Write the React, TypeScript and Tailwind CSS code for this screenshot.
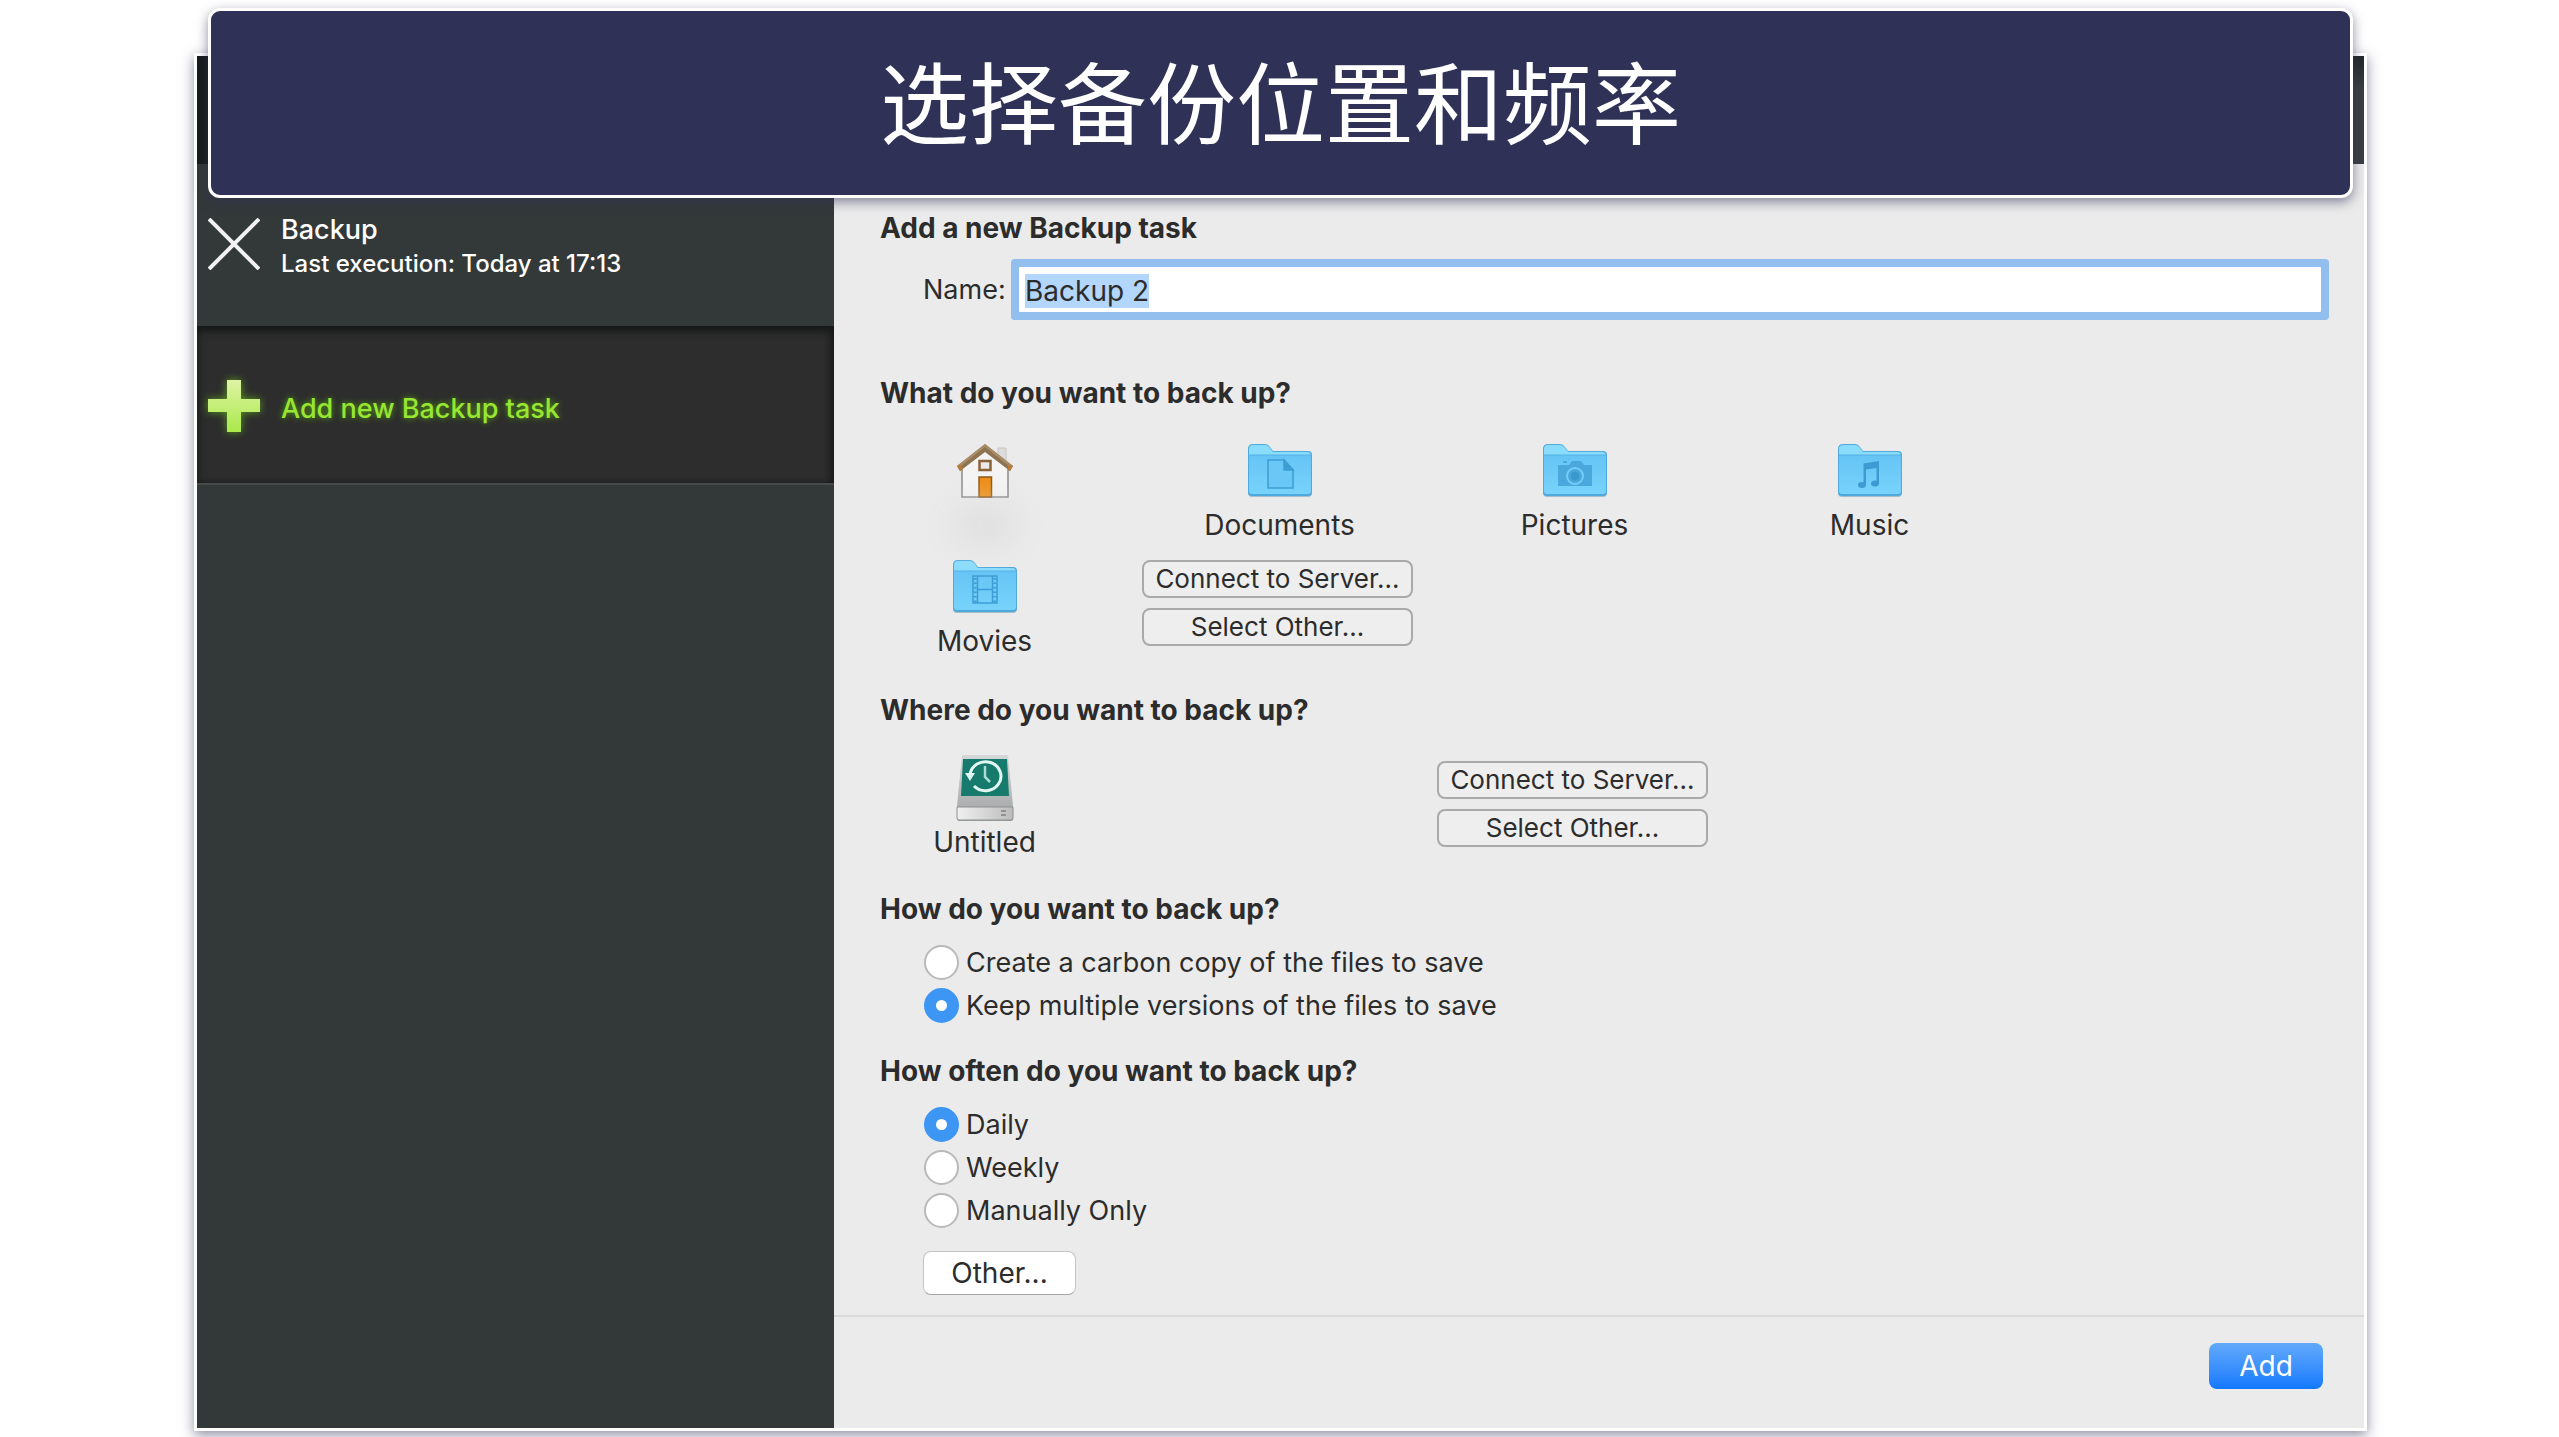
import { useEffect, useRef, type ReactNode } from 'react'

type Glyph = 'document' | 'camera' | 'music' | 'film'

const howOptions = ['Create a carbon copy of the files to save', 'Keep multiple versions of the files to save']
const frequencyOptions = ['Daily', 'Weekly', 'Manually Only']

function FolderGlyph({ glyph }: { glyph: Glyph }) {
  if (glyph === 'document') {
    return (
      <g stroke="#3c9dd4" strokeWidth="1.5">
        <path d="M20 16h16l9 10v18H20z" fill="#6bc8f6" />
        <path d="M36 16v10h9z" fill="#3c9dd4" />
      </g>
    )
  }
  if (glyph === 'camera') {
    return (
      <g>
        <path d="M15 21h11l3-4h9l3 4h8v21H15z" fill="#4aa8dc" />
        <path d="M20 17h4v2h-4z" fill="#4aa8dc" />
        <circle cx="32" cy="32" r="8" fill="#4aa8dc" stroke="#74cdf8" strokeWidth="2" />
        <circle cx="32" cy="32" r="4.5" fill="#3a98ce" />
      </g>
    )
  }
  if (glyph === 'music') {
    return (
      <g fill="#3d9ad2">
        <path d="M25.5 19.5 41 17v22h-2.5V24L28 25.5V41h-2.5z" />
        <ellipse cx="24" cy="41" rx="4" ry="3" />
        <ellipse cx="37" cy="39.5" rx="4" ry="3" />
      </g>
    )
  }
  return (
    <g fill="none" stroke="#3c9dd4" strokeWidth="1.5">
      <path d="M20 16h24v27H20zM24.5 16v27M39.5 16v27M24.5 29.5h15" />
      <path d="M22.2 18v25M41.8 18v25" strokeWidth="3" strokeDasharray="1.5 3" />
    </g>
  )
}

function FolderIcon({ glyph }: { glyph: Glyph }) {
  return (
    <svg viewBox="0 0 64 54" className="w-16 h-[54px]" aria-hidden="true">
      <defs>
        <linearGradient id={`front-${glyph}`} x1="0" y1="0" x2="0" y2="1">
          <stop offset="0" stopColor="#66c4f5" />
          <stop offset="1" stopColor="#77d3fb" />
        </linearGradient>
      </defs>
      <path d="M0 6q0-5 5-5h12q3 0 5 3l3 4h35q4 0 4 4v37q0 4-4 4H4q-4 0-4-4z" fill="#a9bcc8" />
      <path d="M0 5q0-5 5-5h12q3 0 5 3l3 4h35q4 0 4 4v37q0 4-4 4H4q-4 0-4-4z" fill="#4ea9dc" />
      <path d="M1 5q0-4 4-4h12q3 0 5 3l3 4h34q4 0 4 4v35H1z" fill="#8adcfd" />
      <path d="M1 11h62v36q0 3-3 3H4q-3 0-3-3z" fill={`url(#front-${glyph})`} />
      <path d="M1 11h62" stroke="#55b2e3" strokeWidth="1" />
      <FolderGlyph glyph={glyph} />
    </svg>
  )
}

function HomeIcon() {
  return (
    <svg viewBox="0 0 56 56" className="w-14 h-14" aria-hidden="true">
      <path d="M41 5h8v14l-8-7z" fill="#dcdcda" stroke="#c4c4c0" />
      <path d="M5 25 28 6l23 19v29H5z" fill="#f4f4f4" stroke="#8b8b8b" strokeWidth="1.5" />
      <path d="M28 1 56 23l-3 5L28 9 3 28l-3-5z" fill="#8e7351" />
      <path d="M28 1 56 23l-1.5 2L28 4 1.5 25 0 23z" fill="#a98d68" />
      <path d="M52 22l4 1-3 5-3-2zM4 22l-4 1 3 5 3-2z" fill="#b87a35" />
      <rect x="22.5" y="18" width="11" height="9" fill="#e9e9e9" stroke="#8c6239" strokeWidth="2.5" />
      <rect x="22" y="34" width="12.5" height="20" fill="#ee8d13" stroke="#8c5716" strokeWidth="1.5" />
    </svg>
  )
}

function DriveIcon() {
  return (
    <svg viewBox="0 0 58 68" className="w-[58px] h-[68px]" aria-hidden="true">
      <defs>
        <linearGradient id="drive-body" x1="0" y1="0" x2="0" y2="1">
          <stop offset="0" stopColor="#d5d8d8" />
          <stop offset="1" stopColor="#9fa3a4" />
        </linearGradient>
        <linearGradient id="drive-front" x1="0" y1="0" x2="1" y2="0">
          <stop offset="0" stopColor="#f0f0f0" />
          <stop offset="1" stopColor="#bcbcbc" />
        </linearGradient>
      </defs>
      <path d="M6 1h46l5 51v13q0 2-2 2H3q-2 0-2-2V52z" fill="url(#drive-body)" />
      <path d="M7 5h44l2 37H5z" fill="#167a6d" />
      <path d="M1 53h56v11q0 2-2 2H3q-2 0-2-2z" fill="url(#drive-front)" stroke="#8d8f90" strokeWidth="1" />
      <path d="M45 57h5M45 61h5" stroke="#7f8182" strokeWidth="1.5" />
      <path d="M14 21a15.5 14.5 0 1 1 4 11" fill="none" stroke="#e1f7f3" strokeWidth="3" />
      <path d="M9 19h10l-5 8z" fill="#e1f7f3" />
      <path d="M29 12v11l5 5" fill="none" stroke="#a9dcd4" strokeWidth="2.5" />
    </svg>
  )
}

function Place({ label, children }: { label?: string; children: ReactNode }) {
  return (
    <div className="flex flex-col items-center">
      <div className="flex h-[68px] items-center">{children}</div>
      {label ? (
        <p className="h-10">{label}</p>
      ) : (
        <div className="h-10 w-16 rounded-full bg-[#dcdcdc]/80 blur-lg" />
      )}
    </div>
  )
}

function SourceButtons() {
  return (
    <div className="flex flex-col items-center gap-[10px] pt-[7px] pr-1">
      {['Connect to Server...', 'Select Other...'].map((label) => (
        <button
          key={label}
          type="button"
          className="h-[38px] w-[271px] rounded-lg border-2 border-[#a9a9a9] bg-[#eeeeee] text-[26px] leading-[32px]"
        >
          {label}
        </button>
      ))}
    </div>
  )
}

function SectionTitle({ children }: { children: ReactNode }) {
  return <h2 className="pl-[46px] font-bold">{children}</h2>
}

function RadioGroup({ name, options, selected }: { name: string; options: string[]; selected: string }) {
  return (
    <div className="flex flex-col items-start pl-[90px] pt-3 text-[27px]">
      {options.map((option) => (
        <label key={option} className="flex h-[43px] items-center gap-[7px]">
          <input
            type="radio"
            name={name}
            defaultChecked={option === selected}
            className="size-[35px] appearance-none rounded-full border-2 border-[#b9b9b9] bg-white checked:border-[12px] checked:border-[#3e96f4]"
          />
          {option}
        </label>
      ))}
    </div>
  )
}

function Sidebar() {
  return (
    <nav className="w-[637px] shrink-0 bg-[#333939] text-white">
      <a href="#backup" className="flex h-[162px] items-start gap-[21px] pl-[11px] pt-[48px]">
        <svg viewBox="0 0 52 52" className="mt-[6px] size-[52px]" aria-hidden="true">
          <path d="M1 1l50 50M51 1 1 51" stroke="#f1f1f1" strokeWidth="4" />
        </svg>
        <span className="flex flex-col">
          <span className="text-[27px] font-medium leading-[36px]">Backup</span>
          <span className="text-[24px] font-medium leading-[32px]">Last execution: Today at 17:13</span>
        </span>
      </a>
      <a
        href="#new"
        className="flex h-[159px] items-start gap-[21px] border-b-2 border-[#454b4b] bg-[#2d2d2d] pl-[11px] pt-[54px] shadow-[inset_0_5px_8px_#151818,inset_-3px_0_6px_#1d1f1f]"
      >
        <svg
          viewBox="0 0 52 52"
          className="size-[52px] drop-shadow-[0_0_4px_#5b9b1c]"
          aria-hidden="true"
        >
          <defs>
            <linearGradient id="plus" x1="0" y1="0" x2="0" y2="1">
              <stop offset="0" stopColor="#dff3a4" />
              <stop offset="1" stopColor="#a9ea4b" />
            </linearGradient>
          </defs>
          <path d="M19 0h14v19h19v13H33v20H19V32H0V19h19z" fill="url(#plus)" />
        </svg>
        <span className="text-[27px] font-medium leading-[58px] text-[#98e632] [text-shadow:0_0_6px_#5aa512]">
          Add new Backup task
        </span>
      </a>
    </nav>
  )
}

function TaskForm() {
  const nameRef = useRef<HTMLInputElement>(null)

  useEffect(() => {
    nameRef.current?.focus()
    nameRef.current?.select()
  }, [])

  return (
    <form className="flex flex-1 flex-col bg-[#ebebeb] text-[28px] leading-[40px] text-[#2c2c2c]">
      <div className="pt-[44px]">
        <SectionTitle>Add a new Backup task</SectionTitle>
        <div className="mt-[11px] flex items-center pl-[89px] pr-[43px]">
          <label htmlFor="task-name" className="w-[96px] text-[27px]">
            Name:
          </label>
          <input
            id="task-name"
            ref={nameRef}
            type="text"
            defaultValue="Backup 2"
            className="my-2 h-[45px] flex-1 rounded-[1px] bg-white px-[6px] pt-[2px] outline-none ring-8 ring-[#93bfee] selection:bg-[#b3d6fd] selection:text-[#2c2c2c]"
          />
        </div>
      </div>

      <section className="mt-[53px]">
        <SectionTitle>What do you want to back up?</SectionTitle>
        <div className="mt-6 grid grid-cols-[repeat(4,295px)] gap-y-2 pl-[3px]">
          <Place>
            <HomeIcon />
          </Place>
          <Place label="Documents">
            <FolderIcon glyph="document" />
          </Place>
          <Place label="Pictures">
            <FolderIcon glyph="camera" />
          </Place>
          <Place label="Music">
            <FolderIcon glyph="music" />
          </Place>
          <Place label="Movies">
            <FolderIcon glyph="film" />
          </Place>
          <SourceButtons />
        </div>
      </section>

      <section className="mt-[29px]">
        <SectionTitle>Where do you want to back up?</SectionTitle>
        <div className="mt-6 grid grid-cols-[590px_295px] pl-[3px]">
          <div className="w-[295px]">
            <Place label="Untitled">
              <DriveIcon />
            </Place>
          </div>
          <SourceButtons />
        </div>
      </section>

      <section className="mt-[27px]">
        <SectionTitle>How do you want to back up?</SectionTitle>
        <RadioGroup name="how" options={howOptions} selected={howOptions[1]} />
      </section>

      <section className="mt-6">
        <SectionTitle>How often do you want to back up?</SectionTitle>
        <RadioGroup name="frequency" options={frequencyOptions} selected="Daily" />
        <button
          type="button"
          className="ml-[89px] mt-[19px] block h-[44px] w-[153px] rounded-lg border border-[#c4c4c4] border-b-[#a5a5a5] bg-white"
        >
          Other...
        </button>
      </section>

      <footer className="mt-[20px] flex flex-1 items-start justify-end border-t-2 border-[#d9d9d9] pr-[41px] pt-[26px]">
        <button
          type="submit"
          className="h-[46px] w-[114px] rounded-lg bg-linear-to-b from-[#62aafa] to-[#0f78fd] text-white"
        >
          Add
        </button>
      </footer>
    </form>
  )
}

export default function App() {
  return (
    <div className="flex min-h-screen flex-col bg-white pb-[6px] pl-[194px] pr-[192px] pt-2 font-['Inter','Noto_Sans_CJK_SC',sans-serif]">
      <header className="relative z-10 mx-[14px] flex h-[190px] justify-center rounded-xl border-[3px] border-white bg-[#2f3157] pt-[28px] shadow-[0_4px_12px_rgba(47,49,87,0.55)]">
        <h1 className="font-['Noto_Sans_CJK_SC',sans-serif] text-[89px] leading-[120px] text-white">选择备份位置和频率</h1>
      </header>
      <main className="-mt-[145px] flex flex-1 flex-col border-[3px] border-white shadow-[0_4px_12px_rgba(47,49,87,0.55)]">
        <div className="flex h-[108px]">
          <div className="w-[637px] bg-[#161b1c]" />
          <div className="flex-1 bg-linear-to-b from-[#222627] to-[#3a3f41] to-30%" />
        </div>
        <div className="flex flex-1">
          <Sidebar />
          <TaskForm />
        </div>
      </main>
    </div>
  )
}
